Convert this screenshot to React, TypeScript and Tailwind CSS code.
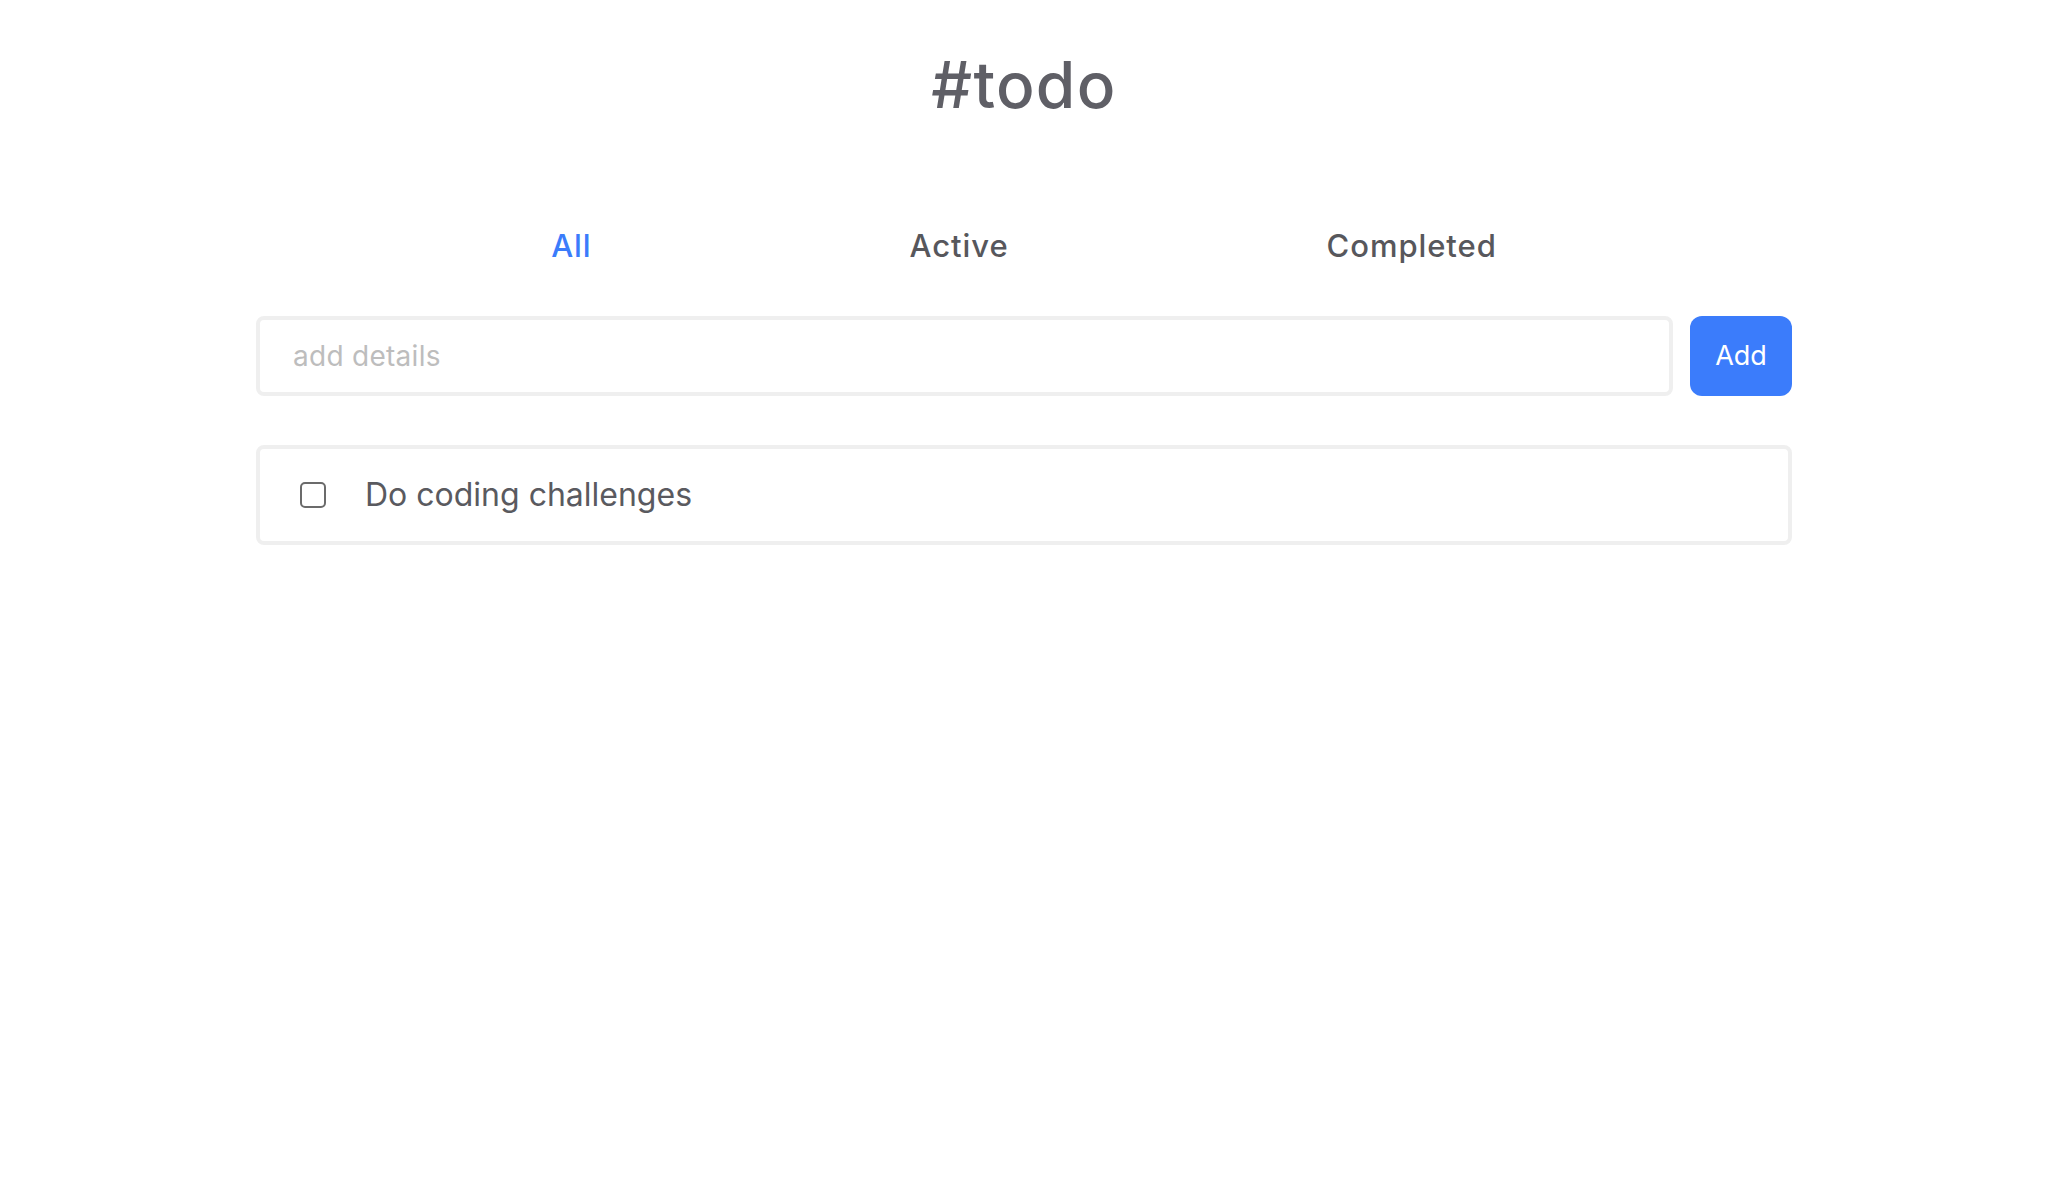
import React, { useState } from 'react';

type Filter = 'All' | 'Active' | 'Completed';

interface Todo {
  id: number;
  text: string;
  done: boolean;
}

const FILTERS: Filter[] = ['All', 'Active', 'Completed'];

export default function App() {
  const [filter, setFilter] = useState<Filter>('All');
  const [draft, setDraft] = useState('');
  const [todos, setTodos] = useState<Todo[]>([
    { id: 1, text: 'Do coding challenges', done: false },
  ]);

  const addTodo = () => {
    if (!draft.trim()) return;
    setTodos([...todos, { id: Date.now(), text: draft.trim(), done: false }]);
    setDraft('');
  };

  const visible = todos.filter((t) =>
    filter === 'All' ? true : filter === 'Active' ? !t.done : t.done
  );

  return (
    <div className="min-h-screen w-full bg-white font-['Inter','Liberation_Sans',sans-serif] text-[#5c5c62]">
      <div className="w-3/4 mx-auto flex flex-col">
        <h1 className="mt-[53px] text-center text-[64px] leading-none font-medium tracking-[0.02em] text-[#5f5f66]">
          #todo
        </h1>

        <div className="mt-[113px] flex justify-center gap-[318px]">
          {FILTERS.map((f) => (
            <button
              key={f}
              onClick={() => setFilter(f)}
              className={
                'text-[31px] leading-none font-medium tracking-[0.03em] ' +
                (filter === f ? 'text-[#3b7cfb]' : 'text-[#57575c]')
              }
            >
              {f}
            </button>
          ))}
        </div>

        <div className="mt-[55px] flex gap-[17px]">
          <input
            value={draft}
            onChange={(e) => setDraft(e.target.value)}
            onKeyDown={(e) => e.key === 'Enter' && addTodo()}
            placeholder="add details"
            className="flex-1 h-[80px] px-[33px] border-4 border-[#efefef] rounded-lg text-[28px] tracking-[0.01em] text-[#555] placeholder:text-[#bdbdbd] outline-none"
          />
          <button
            onClick={addTodo}
            className="w-[102px] h-[80px] rounded-xl bg-[#3b7cfb] text-white text-[27px]"
          >
            Add
          </button>
        </div>

        <div className="mt-[49px] flex flex-col gap-4">
          {visible.map((t) => (
            <label
              key={t.id}
              className="h-[100px] flex items-center border-4 border-[#efefef] rounded-lg pl-[40px]"
            >
              <input
                type="checkbox"
                checked={t.done}
                onChange={() =>
                  setTodos(todos.map((x) => (x.id === t.id ? { ...x, done: !x.done } : x)))
                }
                className="appearance-none w-[26px] h-[26px] border-2 border-[#6b6b6b] rounded-[5px] checked:bg-[#3b7cfb] checked:border-[#3b7cfb]"
              />
              <span
                className={
                  'ml-[39px] text-[32px] text-[#5a5a5f] ' + (t.done ? 'line-through' : '')
                }
              >
                {t.text}
              </span>
            </label>
          ))}
        </div>
      </div>
    </div>
  );
}
